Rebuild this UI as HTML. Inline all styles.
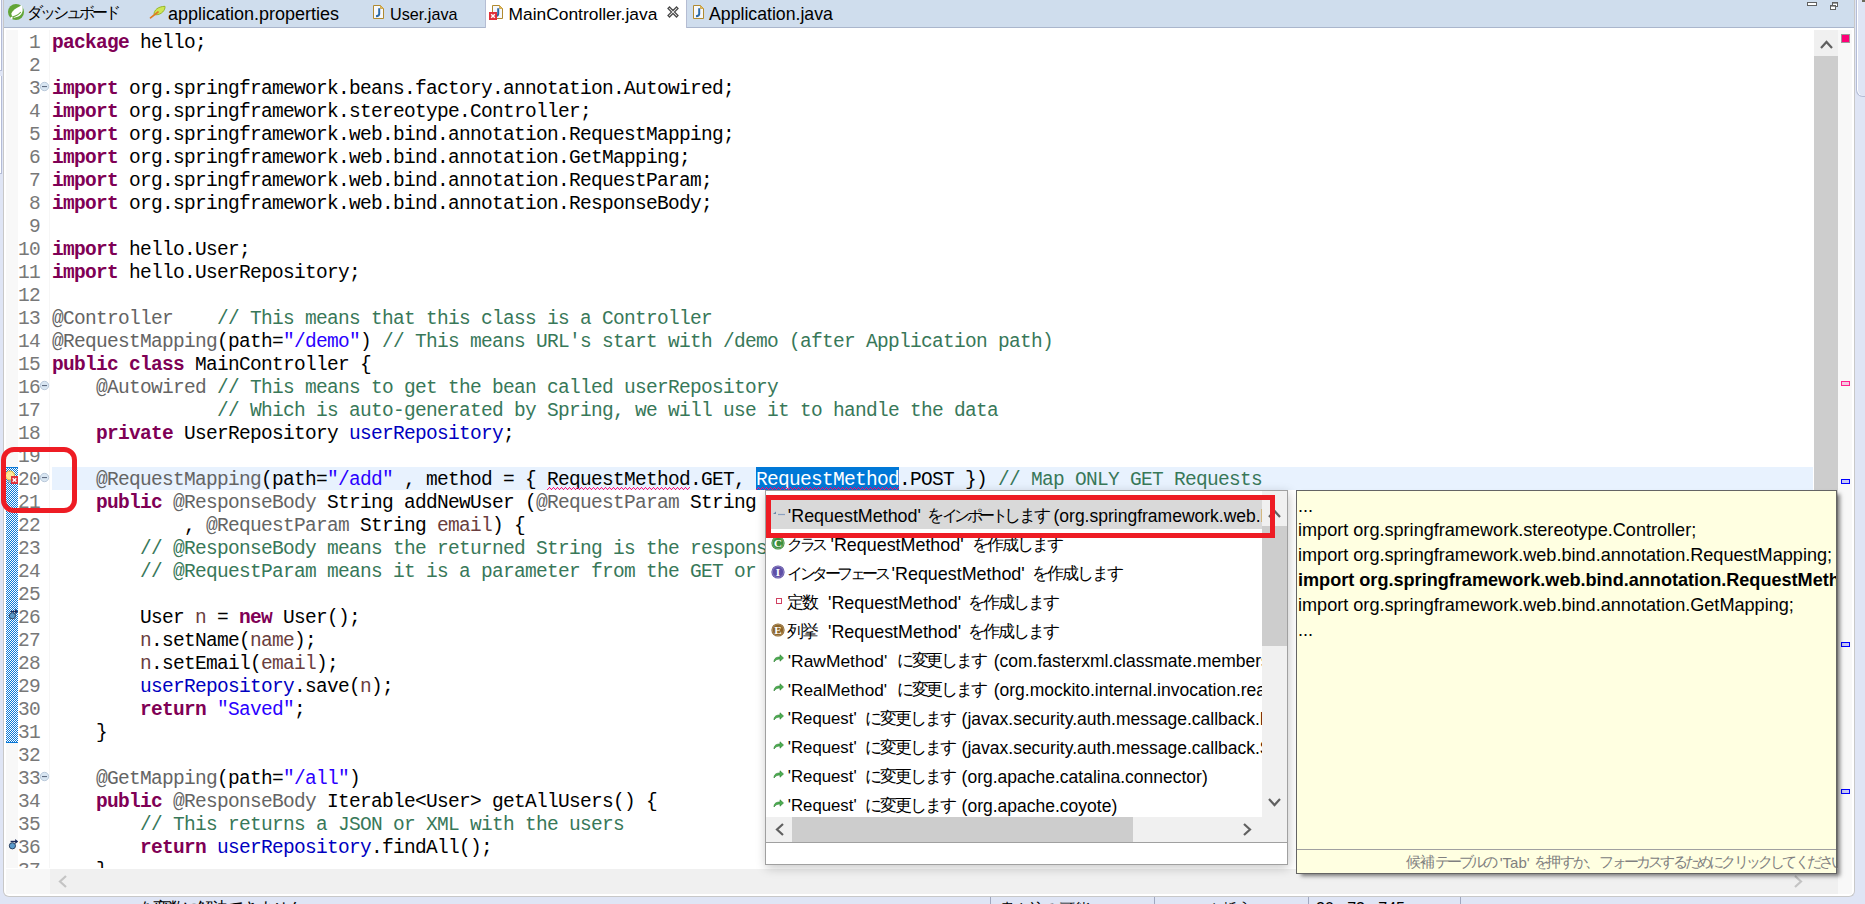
<!DOCTYPE html>
<html><head><meta charset="utf-8"><style>
*{margin:0;padding:0;box-sizing:border-box}
html,body{width:1865px;height:904px;overflow:hidden;background:#dfe5f5;position:relative;font-family:"Liberation Sans",sans-serif}
.abs{position:absolute}
svg{position:absolute;overflow:visible}
.code{position:absolute;left:52px;font-family:"Liberation Mono",monospace;font-size:19.5px;letter-spacing:-0.7019px;line-height:23px;white-space:pre;color:#000}
.ln{position:absolute;left:0;width:40px;text-align:right;font-family:"Liberation Mono",monospace;font-size:19.5px;letter-spacing:-0.7019px;line-height:23px;color:#787878;white-space:pre}
.k{color:#7f0055;font-weight:bold}
.a{color:#646464}
.c{color:#387859}
.s{color:#2a00ff}
.f{color:#0000c0}
.v{color:#6a3e3e}
.sel{color:#fff}
.ui{font-family:"Liberation Sans",sans-serif;white-space:pre;position:absolute;color:#000}
.jp{font-size:17px;letter-spacing:-2.1px;position:relative;top:-1.5px}
.kt{font-size:16px;letter-spacing:-3.5px;position:relative;top:-1px}
.hr{font-size:17px;letter-spacing:-2.1px;position:relative;top:-1.5px}
.stt .jp{font-size:14.5px;letter-spacing:-0.5px}
.stt .kt,.stt .hr{font-size:14.5px;letter-spacing:-2.8px}
</style></head><body>

<div class="abs" style="left:0;top:0;width:2px;height:173px;background:#fff;border-right:1px solid #b4bcd6"></div><div class="abs" style="left:0;top:173px;width:2px;height:1px;background:#b4bcd6"></div>
<div class="abs" style="left:1856px;top:-2px;width:12px;height:99px;border-left:1px solid #b4bcd6;border-bottom:1px solid #b4bcd6;border-bottom-left-radius:7px;box-shadow:inset 1px 0 0 #fff"></div>
<div class="abs" style="left:3px;top:0;width:1852px;height:897px;border:1px solid #c8c8c8;border-top:none;border-radius:0 0 6px 6px;background:#fff;overflow:hidden"></div>
<div class="abs" style="left:4px;top:0;width:1850px;height:28px;background:#cfdded;border-bottom:1px solid #aab6cc"></div>
<div class="abs" style="left:485px;top:0;width:202px;height:28px;background:#fff;border-left:1px solid #b5bdd3;border-right:1px solid #b5bdd3"></div>
<svg style="left:8px;top:4px" width="16" height="16" viewBox="0 0 16 16"><circle cx="8" cy="8" r="8" fill="#62a537"/><path d="M3.3 9.8 C4 6.5 8.5 4 13.8 1.2 C15.8 5.5 15 12 7 13.6 C5 13.9 3.6 12 3.3 9.8 Z" fill="#fff"/><path d="M4.6 13 C8 12 11 10.5 12.8 8" fill="none" stroke="#62a537" stroke-width="1.1"/><circle cx="3.6" cy="13.9" r="1.1" fill="#fff"/></svg>
<div class="ui" style="left:27px;top:2px;font-size:16px;letter-spacing:-3px;line-height:22px">ダッシュボード</div>
<svg style="left:149px;top:5px" width="17" height="14" viewBox="0 0 17 14"><path d="M5 9.5 C5 5 9 1.5 16 1.3 C16.5 5 12.5 9.8 7 9.8 Z" fill="#cde655" stroke="#90b020" stroke-width="0.9"/><path d="M1.5 12.8 L9 7" stroke="#e07a22" stroke-width="1.7" stroke-linecap="round"/></svg>
<div class="ui" style="left:168px;top:3px;font-size:18px;line-height:22px">application.properties</div>
<svg style="left:373px;top:5px" width="11" height="14" viewBox="0 0 11 14"><path d="M0.5 0.5 H7.5 L10.5 3.5 V13.5 H0.5 Z" fill="#f6f8fc" stroke="#b08a30" stroke-width="1"/><path d="M7.5 0.5 L10.5 3.5 H7.5 Z" fill="#e6bf5c" stroke="#c9a040" stroke-width="0.8"/><path d="M6.2 3.2 V9 Q6.2 11 3 11.2" fill="none" stroke="#2c6aa8" stroke-width="2"/></svg>
<div class="ui" style="left:390px;top:3px;font-size:16.2px;line-height:22px">User.java</div>
<svg style="left:492px;top:5px" width="11" height="14" viewBox="0 0 11 14"><path d="M0.5 0.5 H7.5 L10.5 3.5 V13.5 H0.5 Z" fill="#f6f8fc" stroke="#b08a30" stroke-width="1"/><path d="M7.5 0.5 L10.5 3.5 H7.5 Z" fill="#e6bf5c" stroke="#c9a040" stroke-width="0.8"/><path d="M6.2 3.2 V9 Q6.2 11 3 11.2" fill="none" stroke="#2c6aa8" stroke-width="2"/></svg><svg style="left:489px;top:12px" width="8" height="8" viewBox="0 0 8 8"><rect width="8" height="8" fill="#e0303a"/><path d="M2.2 2.2 L5.8 5.8 M5.8 2.2 L2.2 5.8" stroke="#fff" stroke-width="1.4"/></svg>
<div class="ui" style="left:508.5px;top:3px;font-size:17.4px;line-height:22px">MainController.java</div>
<svg style="left:667px;top:6px" width="12" height="12" viewBox="0 0 12 12"><path d="M1 2.5 L2.5 1 L6 4.5 L9.5 1 L11 2.5 L7.5 6 L11 9.5 L9.5 11 L6 7.5 L2.5 11 L1 9.5 L4.5 6 Z" fill="none" stroke="#4a4a4a" stroke-width="1.25"/></svg>
<svg style="left:693px;top:5px" width="11" height="14" viewBox="0 0 11 14"><path d="M0.5 0.5 H7.5 L10.5 3.5 V13.5 H0.5 Z" fill="#f6f8fc" stroke="#b08a30" stroke-width="1"/><path d="M7.5 0.5 L10.5 3.5 H7.5 Z" fill="#e6bf5c" stroke="#c9a040" stroke-width="0.8"/><path d="M6.2 3.2 V9 Q6.2 11 3 11.2" fill="none" stroke="#2c6aa8" stroke-width="2"/></svg>
<div class="ui" style="left:709px;top:3px;font-size:17.7px;line-height:22px">Application.java</div>
<svg style="left:1806px;top:1px" width="34" height="10" viewBox="0 0 34 10"><rect x="1.5" y="1.5" width="9" height="3" fill="#fff" stroke="#606060" stroke-width="1"/><rect x="26.5" y="1.5" width="5" height="4" fill="#fff" stroke="#606060" stroke-width="1"/><rect x="26" y="1" width="6" height="1.6" fill="#606060"/><rect x="24.5" y="4.5" width="5" height="4" fill="#fff" stroke="#606060" stroke-width="1"/><rect x="24" y="4" width="6" height="1.6" fill="#606060"/></svg>
<div class="abs" style="left:1862px;top:0;width:3px;height:2px;background:#6a6a5a"></div>
<div class="abs" style="left:6px;top:30px;width:12px;height:838px;background:#f8f8f8"></div>
<svg style="left:6px;top:467px" width="12" height="276"><defs><pattern id="chk" width="2" height="2" patternUnits="userSpaceOnUse"><rect width="2" height="2" fill="#fff"/><rect width="1" height="1" fill="#0a78d7"/><rect x="1" y="1" width="1" height="1" fill="#0a78d7"/></pattern></defs><rect width="12" height="276" fill="url(#chk)"/><rect width="12" height="1" fill="#0a78d7"/><rect y="275" width="12" height="1" fill="#0a78d7"/></svg>
<div class="abs" style="left:49px;top:30px;width:1px;height:838px;background:#f6f6f6"></div>
<div class="abs" style="left:0;top:70px;width:2px;height:1px;background:#b4bcd6"></div><div class="abs" style="left:0;top:71px;width:2px;height:5px;background:#dfe5f5"></div>
<div class="abs" style="left:52px;top:467px;width:1761px;height:23px;background:#e8f2fe"></div>
<div class="abs" style="left:756.0px;top:467px;width:143.0px;height:23px;background:#0078d7"></div>
<div class="abs" style="left:0;top:0;width:1813px;height:868px;overflow:hidden">
<div class="ln" style="top:31.7px">1</div>
<div class="ln" style="top:54.7px">2</div>
<div class="ln" style="top:77.7px">3</div>
<div class="ln" style="top:100.7px">4</div>
<div class="ln" style="top:123.7px">5</div>
<div class="ln" style="top:146.7px">6</div>
<div class="ln" style="top:169.7px">7</div>
<div class="ln" style="top:192.7px">8</div>
<div class="ln" style="top:215.7px">9</div>
<div class="ln" style="top:238.7px">10</div>
<div class="ln" style="top:261.7px">11</div>
<div class="ln" style="top:284.7px">12</div>
<div class="ln" style="top:307.7px">13</div>
<div class="ln" style="top:330.7px">14</div>
<div class="ln" style="top:353.7px">15</div>
<div class="ln" style="top:376.7px">16</div>
<div class="ln" style="top:399.7px">17</div>
<div class="ln" style="top:422.7px">18</div>
<div class="ln" style="top:445.7px">19</div>
<div class="ln" style="top:468.7px">20</div>
<div class="ln" style="top:491.7px">21</div>
<div class="ln" style="top:514.7px">22</div>
<div class="ln" style="top:537.7px">23</div>
<div class="ln" style="top:560.7px">24</div>
<div class="ln" style="top:583.7px">25</div>
<div class="ln" style="top:606.7px">26</div>
<div class="ln" style="top:629.7px">27</div>
<div class="ln" style="top:652.7px">28</div>
<div class="ln" style="top:675.7px">29</div>
<div class="ln" style="top:698.7px">30</div>
<div class="ln" style="top:721.7px">31</div>
<div class="ln" style="top:744.7px">32</div>
<div class="ln" style="top:767.7px">33</div>
<div class="ln" style="top:790.7px">34</div>
<div class="ln" style="top:813.7px">35</div>
<div class="ln" style="top:836.7px">36</div>
<div class="ln" style="top:859.7px">37</div>
<div class="code" style="top:31.7px"><b class="k">package</b> hello;

<b class="k">import</b> org.springframework.beans.factory.annotation.Autowired;
<b class="k">import</b> org.springframework.stereotype.Controller;
<b class="k">import</b> org.springframework.web.bind.annotation.RequestMapping;
<b class="k">import</b> org.springframework.web.bind.annotation.GetMapping;
<b class="k">import</b> org.springframework.web.bind.annotation.RequestParam;
<b class="k">import</b> org.springframework.web.bind.annotation.ResponseBody;

<b class="k">import</b> hello.User;
<b class="k">import</b> hello.UserRepository;

<span class="a">@Controller</span>    <span class="c">// This means that this class is a Controller</span>
<span class="a">@RequestMapping</span>(path=<span class="s">&quot;/demo&quot;</span>) <span class="c">// This means URL&#x27;s start with /demo (after Application path)</span>
<b class="k">public</b> <b class="k">class</b> MainController {
    <span class="a">@Autowired</span> <span class="c">// This means to get the bean called userRepository</span>
               <span class="c">// Which is auto-generated by Spring, we will use it to handle the data</span>
    <b class="k">private</b> UserRepository <span class="f">userRepository</span>;

    <span class="a">@RequestMapping</span>(path=<span class="s">&quot;/add&quot;</span> , method = { RequestMethod.GET, <span class="sel">RequestMethod</span>.POST }) <span class="c">// Map ONLY GET Requests</span>
    <b class="k">public</b> <span class="a">@ResponseBody</span> String addNewUser (<span class="a">@RequestParam</span> String <span class="v">name</span>
            , <span class="a">@RequestParam</span> String <span class="v">email</span>) {
        <span class="c">// @ResponseBody means the returned String is the response, not a view name</span>
        <span class="c">// @RequestParam means it is a parameter from the GET or POST request</span>

        User <span class="v">n</span> = <b class="k">new</b> User();
        <span class="v">n</span>.setName(<span class="v">name</span>);
        <span class="v">n</span>.setEmail(<span class="v">email</span>);
        <span class="f">userRepository</span>.save(<span class="v">n</span>);
        <b class="k">return</b> <span class="s">&quot;Saved&quot;</span>;
    }

    <span class="a">@GetMapping</span>(path=<span class="s">&quot;/all&quot;</span>)
    <b class="k">public</b> <span class="a">@ResponseBody</span> Iterable&lt;User&gt; getAllUsers() {
        <span class="c">// This returns a JSON or XML with the users</span>
        <b class="k">return</b> <span class="f">userRepository</span>.findAll();
    }</div>
</div>
<svg style="left:40px;top:82px" width="10" height="10" viewBox="0 0 10 10"><circle cx="4.5" cy="4.5" r="4.2" fill="#d9e6f2" stroke="#b4c4d6" stroke-width="0.9"/><rect x="2" y="4" width="5" height="1.1" fill="#5f6b80"/></svg>
<svg style="left:40px;top:381px" width="10" height="10" viewBox="0 0 10 10"><circle cx="4.5" cy="4.5" r="4.2" fill="#d9e6f2" stroke="#b4c4d6" stroke-width="0.9"/><rect x="2" y="4" width="5" height="1.1" fill="#5f6b80"/></svg>
<svg style="left:40px;top:473px" width="10" height="10" viewBox="0 0 10 10"><circle cx="4.5" cy="4.5" r="4.2" fill="#d9e6f2" stroke="#b4c4d6" stroke-width="0.9"/><rect x="2" y="4" width="5" height="1.1" fill="#5f6b80"/></svg>
<svg style="left:40px;top:772px" width="10" height="10" viewBox="0 0 10 10"><circle cx="4.5" cy="4.5" r="4.2" fill="#d9e6f2" stroke="#b4c4d6" stroke-width="0.9"/><rect x="2" y="4" width="5" height="1.1" fill="#5f6b80"/></svg>
<svg style="left:5px;top:470px" width="14" height="16" viewBox="0 0 14 16"><circle cx="5" cy="5.5" r="4.5" fill="#fde89a" stroke="#e8b830" stroke-width="1"/><rect x="3" y="10" width="4" height="3" fill="#9aa" /><rect x="6" y="6" width="7" height="8" fill="#e0303a"/><path d="M7.7 8.2 L11.3 11.8 M11.3 8.2 L7.7 11.8" stroke="#fff" stroke-width="1.3"/></svg>
<svg style="left:8px;top:608px" width="12" height="14" viewBox="0 0 12 14"><path d="M2.6 3.5 H8" stroke="#1a2a5a" stroke-width="1.4"/><path d="M7.2 1 L10.2 3.5 L7.2 6 Z" fill="#1a2a5a"/><circle cx="4.4" cy="7.8" r="3.1" fill="#5a9acb" stroke="#2a4060" stroke-width="1"/></svg>
<svg style="left:8px;top:838px" width="12" height="14" viewBox="0 0 12 14"><path d="M2.6 3.5 H8" stroke="#1a2a5a" stroke-width="1.4"/><path d="M7.2 1 L10.2 3.5 L7.2 6 Z" fill="#1a2a5a"/><circle cx="4.4" cy="7.8" r="3.1" fill="#5a9acb" stroke="#2a4060" stroke-width="1"/></svg>
<svg style="left:547px;top:487px" width="143" height="3" shape-rendering="crispEdges"><defs><pattern id="sq1" width="4" height="3" patternUnits="userSpaceOnUse"><rect x="0" y="2" width="1" height="1" fill="#ff0a78"/><rect x="1" y="1" width="1" height="1" fill="#ff0a78"/><rect x="2" y="0" width="1" height="1" fill="#ff0a78"/><rect x="3" y="1" width="1" height="1" fill="#ff0a78"/></pattern></defs><rect width="143" height="3" fill="url(#sq1)"/></svg>
<svg style="left:756px;top:487px" width="143" height="3" shape-rendering="crispEdges"><defs><pattern id="sq2" width="4" height="3" patternUnits="userSpaceOnUse"><rect x="0" y="2" width="1" height="1" fill="#ff0a78"/><rect x="1" y="1" width="1" height="1" fill="#ff0a78"/><rect x="2" y="0" width="1" height="1" fill="#ff0a78"/><rect x="3" y="1" width="1" height="1" fill="#ff0a78"/></pattern></defs><rect width="143" height="3" fill="url(#sq2)"/></svg>
<div class="abs" style="left:1814px;top:30px;width:24px;height:838px;background:#cdcdcd"></div>
<div class="abs" style="left:1814px;top:30px;width:24px;height:26px;background:#f0f0f0"></div>
<svg style="left:1820px;top:39px" width="13" height="11" viewBox="0 0 13 11"><path d="M1 9 L6.5 3 L12 9" fill="none" stroke="#606060" stroke-width="2.2"/></svg>
<div class="abs" style="left:1838px;top:30px;width:14px;height:864px;background:#f8f8f8"></div>
<div class="abs" style="left:1841px;top:34px;width:9px;height:9px;background:#ff0078;border:1px solid #9a9a9a"></div>
<div class="abs" style="left:1841px;top:381px;width:9px;height:5px;background:#f5c8e0;border:1px solid #ff2090"></div>
<div class="abs" style="left:1841px;top:479px;width:9px;height:5px;background:#c8c8f5;border:1px solid #0000ff"></div>
<div class="abs" style="left:1841px;top:642px;width:9px;height:5px;background:#c8c8f5;border:1px solid #0000ff"></div>
<div class="abs" style="left:1841px;top:789px;width:9px;height:5px;background:#c8c8f5;border:1px solid #0000ff"></div>
<div class="abs" style="left:6px;top:869px;width:44px;height:25px;background:#f7f7f7"></div>
<div class="abs" style="left:50px;top:869px;width:1788px;height:25px;background:#f0f0f0"></div>
<svg style="left:57px;top:875px" width="11" height="13" viewBox="0 0 11 13"><path d="M9 1 L3 6.5 L9 12" fill="none" stroke="#c4c4c4" stroke-width="2.2"/></svg>
<svg style="left:1793px;top:875px" width="11" height="13" viewBox="0 0 11 13"><path d="M2 1 L8 6.5 L2 12" fill="none" stroke="#c4c4c4" stroke-width="2.2"/></svg>
<div class="ui" style="left:35px;top:900px;font-size:14px;line-height:20px;color:#000">RequestMethod <span class="jp">を変数に解決できません</span></div>
<div class="abs" style="left:990px;top:897px;width:1px;height:7px;background:#a0a8c0"></div>
<div class="abs" style="left:1154px;top:897px;width:1px;height:7px;background:#a0a8c0"></div>
<div class="abs" style="left:1308px;top:897px;width:1px;height:7px;background:#a0a8c0"></div>
<div class="abs" style="left:1460px;top:897px;width:1px;height:7px;background:#a0a8c0"></div>
<div class="ui" style="left:1000px;top:899px;font-size:15px;line-height:20px">書き込み可能</div>
<div class="ui" style="left:1163px;top:899px;font-size:15px;line-height:20px">スマート挿入</div>
<div class="ui" style="left:1316px;top:899px;font-size:16px;line-height:20px">20 : 73 : 745</div>
<div class="abs" style="left:1px;top:447px;width:76px;height:66px;border:5px solid #ee1c24;border-radius:13px"></div>
<div class="abs" style="left:765px;top:490px;width:523px;height:375px;background:#fff;border:1px solid #a0a0a0;box-shadow:1px 3px 10px rgba(0,0,0,0.22)"></div>
<div class="abs" style="left:771px;top:500px;width:491px;height:29px;background:#d9d9d9"></div>
<div class="abs" style="left:766px;top:491px;width:496px;height:326px;overflow:hidden">
<div class="ui" style="left:21.8px;top:14px;font-size:17.9px;line-height:22px">&#x27;RequestMethod&#x27;</div>
<div class="ui" style="left:160.7px;top:14px;font-size:17.5px;line-height:22px"><span class="hr">を</span><span class="kt">インポート</span><span class="hr">します</span></div>
<div class="ui" style="left:287.5px;top:14px;font-size:17.5px;line-height:22px">(org.springframework.web.bind.annotation)</div>
<svg style="left:6px;top:18px" width="14" height="10" viewBox="0 0 14 10"><path d="M1 5 L4 2.5 V5 Z" fill="#6a8aa8"/><path d="M6 5.5 H13" stroke="#8aa0c0" stroke-width="1.2"/></svg>
<div class="ui" style="left:21.2px;top:43px;font-size:17.5px;line-height:22px"><span class="kt">クラス</span></div>
<div class="ui" style="left:64.5px;top:43px;font-size:17.9px;line-height:22px">&#x27;RequestMethod&#x27;</div>
<div class="ui" style="left:206.2px;top:43px;font-size:17.5px;line-height:22px"><span class="hr">を</span><span class="jp">作成</span><span class="hr">します</span></div>
<svg style="left:4.5px;top:44.5px" width="14" height="14" viewBox="0 0 14 14"><circle cx="7" cy="7" r="6.6" fill="#3d8f3d"/><circle cx="7" cy="7" r="5.6" fill="none" stroke="rgba(255,255,255,0.25)" stroke-width="1"/><text x="7" y="10.8" font-family="Liberation Serif" font-weight="bold" font-size="11" fill="#fff" text-anchor="middle">C</text></svg>
<div class="ui" style="left:21.2px;top:72px;font-size:17.5px;line-height:22px"><span class="kt">インターフェース</span></div>
<div class="ui" style="left:125.6px;top:72px;font-size:17.9px;line-height:22px">&#x27;RequestMethod&#x27;</div>
<div class="ui" style="left:266.4px;top:72px;font-size:17.5px;line-height:22px"><span class="hr">を</span><span class="jp">作成</span><span class="hr">します</span></div>
<svg style="left:4.5px;top:73.5px" width="14" height="14" viewBox="0 0 14 14"><circle cx="7" cy="7" r="6.6" fill="#5e4fa6"/><circle cx="7" cy="7" r="5.6" fill="none" stroke="rgba(255,255,255,0.25)" stroke-width="1"/><text x="7" y="10.8" font-family="Liberation Serif" font-weight="bold" font-size="11" fill="#fff" text-anchor="middle">I</text></svg>
<div class="ui" style="left:21.2px;top:101px;font-size:17.5px;line-height:22px"><span class="jp">定数</span></div>
<div class="ui" style="left:62.0px;top:101px;font-size:17.9px;line-height:22px">&#x27;RequestMethod&#x27;</div>
<div class="ui" style="left:202.2px;top:101px;font-size:17.5px;line-height:22px"><span class="hr">を</span><span class="jp">作成</span><span class="hr">します</span></div>
<div class="abs" style="left:10px;top:107px;width:6px;height:6px;border:1px solid #d04060;background:#fff"></div>
<div class="ui" style="left:21.2px;top:130px;font-size:17.5px;line-height:22px"><span class="jp">列挙</span></div>
<div class="ui" style="left:62.0px;top:130px;font-size:17.9px;line-height:22px">&#x27;RequestMethod&#x27;</div>
<div class="ui" style="left:202.2px;top:130px;font-size:17.5px;line-height:22px"><span class="hr">を</span><span class="jp">作成</span><span class="hr">します</span></div>
<svg style="left:4.5px;top:131.5px" width="14" height="14" viewBox="0 0 14 14"><circle cx="7" cy="7" r="6.6" fill="#8c6428"/><circle cx="7" cy="7" r="5.6" fill="none" stroke="rgba(255,255,255,0.25)" stroke-width="1"/><text x="7" y="10.8" font-family="Liberation Serif" font-weight="bold" font-size="11" fill="#fff" text-anchor="middle">E</text></svg>
<div class="ui" style="left:21.8px;top:159px;font-size:17.4px;line-height:22px">&#x27;RawMethod&#x27;</div>
<div class="ui" style="left:130.6px;top:159px;font-size:17.5px;line-height:22px"><span class="hr">に</span><span class="jp">変更</span><span class="hr">します</span></div>
<div class="ui" style="left:227.7px;top:159px;font-size:17.5px;line-height:22px">(com.fasterxml.classmate.members)</div>
<svg style="left:7px;top:163px" width="11" height="9" viewBox="0 0 11 9"><path d="M1 8 C1 4 3.5 3 7 3 V0.8 L10.5 4 L7 7.2 V5 C4 5 2.5 6 1 8 Z" fill="#4caf50" stroke="#2e7d32" stroke-width="0.6"/></svg>
<div class="ui" style="left:21.8px;top:188px;font-size:17.2px;line-height:22px">&#x27;RealMethod&#x27;</div>
<div class="ui" style="left:130.6px;top:188px;font-size:17.5px;line-height:22px"><span class="hr">に</span><span class="jp">変更</span><span class="hr">します</span></div>
<div class="ui" style="left:227.7px;top:188px;font-size:17.5px;line-height:22px">(org.mockito.internal.invocation.realmethod)</div>
<svg style="left:7px;top:192px" width="11" height="9" viewBox="0 0 11 9"><path d="M1 8 C1 4 3.5 3 7 3 V0.8 L10.5 4 L7 7.2 V5 C4 5 2.5 6 1 8 Z" fill="#4caf50" stroke="#2e7d32" stroke-width="0.6"/></svg>
<div class="ui" style="left:21.8px;top:217px;font-size:16.75px;line-height:22px">&#x27;Request&#x27;</div>
<div class="ui" style="left:99.3px;top:217px;font-size:17.5px;line-height:22px"><span class="hr">に</span><span class="jp">変更</span><span class="hr">します</span></div>
<div class="ui" style="left:195.6px;top:217px;font-size:17.5px;line-height:22px">(javax.security.auth.message.callback.PasswordValidationCallback)</div>
<svg style="left:7px;top:221px" width="11" height="9" viewBox="0 0 11 9"><path d="M1 8 C1 4 3.5 3 7 3 V0.8 L10.5 4 L7 7.2 V5 C4 5 2.5 6 1 8 Z" fill="#4caf50" stroke="#2e7d32" stroke-width="0.6"/></svg>
<div class="ui" style="left:21.8px;top:246px;font-size:16.75px;line-height:22px">&#x27;Request&#x27;</div>
<div class="ui" style="left:99.3px;top:246px;font-size:17.5px;line-height:22px"><span class="hr">に</span><span class="jp">変更</span><span class="hr">します</span></div>
<div class="ui" style="left:195.6px;top:246px;font-size:17.5px;line-height:22px">(javax.security.auth.message.callback.SecretKeyCallback)</div>
<svg style="left:7px;top:250px" width="11" height="9" viewBox="0 0 11 9"><path d="M1 8 C1 4 3.5 3 7 3 V0.8 L10.5 4 L7 7.2 V5 C4 5 2.5 6 1 8 Z" fill="#4caf50" stroke="#2e7d32" stroke-width="0.6"/></svg>
<div class="ui" style="left:21.8px;top:275px;font-size:16.75px;line-height:22px">&#x27;Request&#x27;</div>
<div class="ui" style="left:99.3px;top:275px;font-size:17.5px;line-height:22px"><span class="hr">に</span><span class="jp">変更</span><span class="hr">します</span></div>
<div class="ui" style="left:195.6px;top:275px;font-size:17.5px;line-height:22px">(org.apache.catalina.connector)</div>
<svg style="left:7px;top:279px" width="11" height="9" viewBox="0 0 11 9"><path d="M1 8 C1 4 3.5 3 7 3 V0.8 L10.5 4 L7 7.2 V5 C4 5 2.5 6 1 8 Z" fill="#4caf50" stroke="#2e7d32" stroke-width="0.6"/></svg>
<div class="ui" style="left:21.8px;top:304px;font-size:16.75px;line-height:22px">&#x27;Request&#x27;</div>
<div class="ui" style="left:99.3px;top:304px;font-size:17.5px;line-height:22px"><span class="hr">に</span><span class="jp">変更</span><span class="hr">します</span></div>
<div class="ui" style="left:195.6px;top:304px;font-size:17.5px;line-height:22px">(org.apache.coyote)</div>
<svg style="left:7px;top:308px" width="11" height="9" viewBox="0 0 11 9"><path d="M1 8 C1 4 3.5 3 7 3 V0.8 L10.5 4 L7 7.2 V5 C4 5 2.5 6 1 8 Z" fill="#4caf50" stroke="#2e7d32" stroke-width="0.6"/></svg>
</div>
<div class="abs" style="left:1262px;top:491px;width:25px;height:351px;background:#f0f0f0"></div>
<div class="abs" style="left:1262px;top:526px;width:25px;height:120px;background:#cdcdcd"></div>
<svg style="left:1268px;top:508px" width="13" height="11" viewBox="0 0 13 11"><path d="M1 9 L6.5 3 L12 9" fill="none" stroke="#606060" stroke-width="2.2"/></svg>
<svg style="left:1268px;top:797px" width="13" height="11" viewBox="0 0 13 11"><path d="M1 2 L6.5 8 L12 2" fill="none" stroke="#606060" stroke-width="2.2"/></svg>
<div class="abs" style="left:766px;top:817px;width:496px;height:25px;background:#f0f0f0"></div>
<div class="abs" style="left:792px;top:817px;width:341px;height:25px;background:#cdcdcd"></div>
<svg style="left:774px;top:823px" width="11" height="13" viewBox="0 0 11 13"><path d="M9 1 L3 6.5 L9 12" fill="none" stroke="#606060" stroke-width="2.2"/></svg>
<svg style="left:1242px;top:823px" width="11" height="13" viewBox="0 0 11 13"><path d="M2 1 L8 6.5 L2 12" fill="none" stroke="#606060" stroke-width="2.2"/></svg>
<div class="abs" style="left:766px;top:842px;width:521px;height:1px;background:#a0a0a0"></div>
<div class="abs" style="left:766px;top:495px;width:509px;height:43px;border:5px solid #ee1c24"></div>
<div class="abs" style="left:1296px;top:490px;width:541px;height:384px;background:#ffffe1;border:1px solid #646464;box-shadow:4px 3px 4px -1px rgba(0,0,0,0.5)"></div>
<div class="abs" style="left:1297px;top:491px;width:539px;height:383px;overflow:hidden">
<div class="ui" style="left:1px;top:3.5px;font-size:18.1px;line-height:22px">...</div>
<div class="ui" style="left:1px;top:28.3px;font-size:18.1px;line-height:22px">import org.springframework.stereotype.Controller;</div>
<div class="ui" style="left:1px;top:53.1px;font-size:18.1px;line-height:22px">import org.springframework.web.bind.annotation.RequestMapping;</div>
<div class="ui" style="left:1px;top:77.9px;font-size:18.1px;line-height:22px"><b>import org.springframework.web.bind.annotation.RequestMethod;</b></div>
<div class="ui" style="left:1px;top:102.7px;font-size:18.1px;line-height:22px">import org.springframework.web.bind.annotation.GetMapping;</div>
<div class="ui" style="left:1px;top:127.5px;font-size:18.1px;line-height:22px">...</div>
<div class="abs" style="left:0;top:358px;width:539px;height:1px;background:#a0a0a0"></div>
<div class="ui stt" style="left:108.5px;top:362px;font-size:15px;line-height:20px;color:#808080"><span class="jp">候補</span><span class="kt">テーブル</span><span class="hr">の</span> &#x27;Tab&#x27; <span class="hr">を</span><span class="jp">押</span><span class="hr">すか</span><span class="jp">、</span><span class="kt">フォーカス</span><span class="hr">するために</span><span class="kt">クリック</span><span class="hr">してください</span></div>
</div>
</body></html>
